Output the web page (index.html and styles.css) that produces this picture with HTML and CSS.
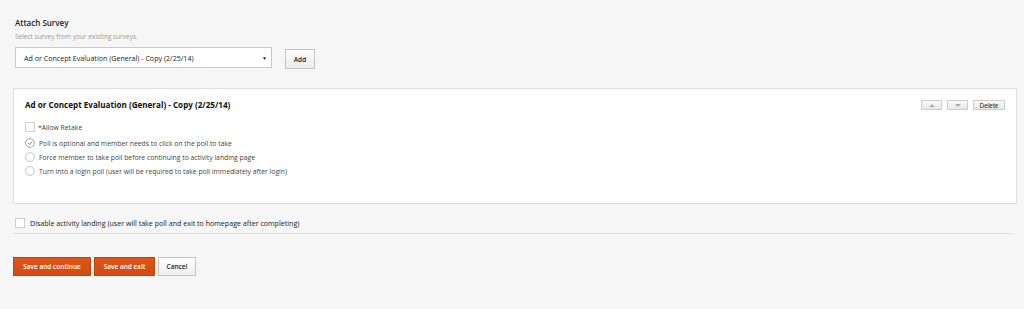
FILE: index.html
```html
<!DOCTYPE html>
<html>
<head>
<meta charset="utf-8">
<link rel="stylesheet" href="styles.css">
</head>
<body>
<div class="page">
  <section class="attach">
    <h2 class="attach-title">Attach Survey</h2>
    <p class="hint">Select survey from your existing surveys.</p>
    <div class="select-row">
      <div class="select">
        <span class="select-text">Ad or Concept Evaluation (General) - Copy (2/25/14)</span>
        <span class="caret">&#9660;</span>
      </div>
      <button class="btn-add">Add</button>
    </div>
  </section>

  <div class="panel">
    <div class="panel-head">
      <h3 class="panel-title">Ad or Concept Evaluation (General) - Copy (2/25/14)</h3>
      <div class="panel-tools">
        <button class="tool arrow"><span class="tri up"></span></button>
        <button class="tool arrow"><span class="tri down"></span></button>
        <button class="tool del">Delete</button>
      </div>
    </div>
    <label class="check-row retake"><span class="box"></span>*Allow Retake</label>
    <div class="radios">
      <label class="radio-row"><span class="circle checked"><svg viewBox="0 0 10 10" width="10" height="10"><circle cx="5" cy="5" r="4.4" fill="#fff" stroke="#8a8a8a" stroke-width="0.8"/><path d="M3 5.1 L4.4 6.4 L7 3.7" fill="none" stroke="#555" stroke-width="0.8"/></svg></span>Poll is optional and member needs to click on the poll to take</label>
      <label class="radio-row"><span class="circle"><svg viewBox="0 0 10 10" width="10" height="10"><circle cx="5" cy="5" r="4.4" fill="#fff" stroke="#bbb" stroke-width="0.8"/></svg></span>Force member to take poll before continuing to activity landing page</label>
      <label class="radio-row"><span class="circle"><svg viewBox="0 0 10 10" width="10" height="10"><circle cx="5" cy="5" r="4.4" fill="#fff" stroke="#bbb" stroke-width="0.8"/></svg></span>Turn into a login poll (user will be required to take poll immediately after login)</label>
    </div>
  </div>

  <label class="check-row disable"><span class="box"></span>Disable activity landing (user will take poll and exit to homepage after completing)</label>
  <div class="divider"></div>

  <div class="actions">
    <button class="btn-primary">Save and continue</button>
    <button class="btn-primary">Save and exit</button>
    <button class="btn-cancel">Cancel</button>
  </div>
</div>
</body>
</html>
```

FILE: styles.css
```css
html, body {
  margin: 0;
  padding: 0;
  background: #f6f6f6;
  font-family: "Open Sans", "Noto Sans", sans-serif;
  color: #333;
}
.page {
  padding: 17px 7px 0 13px;
}
.attach {
  padding-left: 2px;
}
.attach-title {
  margin: 0;
  font-size: 8px;
  font-weight: 600;
  color: #222;
  line-height: 12px;
}
.hint {
  margin: 3px 0 0;
  font-size: 6.5px;
  color: #9a9a9a;
  line-height: 9px;
}
.select-row {
  display: flex;
  align-items: flex-start;
  margin-top: 6px;
  gap: 13px;
}
.select {
  width: 257px;
  height: 21px;
  box-sizing: border-box;
  background: #fff;
  border: 1px solid #c9c9c9;
  display: flex;
  align-items: center;
  justify-content: space-between;
  padding: 0 4px 0 8px;
  font-size: 7.1px;
  color: #222;
}
.caret {
  font-size: 5px;
  color: #222;
}
.btn-add {
  margin-top: 2px;
  width: 30px;
  height: 20px;
  box-sizing: border-box;
  border: 1px solid #c4c4c4;
  background: linear-gradient(#fbfbfb, #ececec);
  font-family: inherit;
  font-size: 6.5px;
  font-weight: 600;
  color: #222;
  padding: 0;
}
.panel {
  margin-top: 19px;
  width: 1004px;
  height: 116px;
  box-sizing: border-box;
  background: #fff;
  border: 1px solid #dedede;
  padding: 10px 11px 0 11px;
}
.panel-head {
  display: flex;
  justify-content: space-between;
  align-items: flex-start;
}
.panel-title {
  margin: 0;
  font-size: 8.1px;
  font-weight: 700;
  color: #111;
  line-height: 11px;
}
.panel-tools {
  display: flex;
  gap: 5px;
  margin-top: 1px;
}
.tool {
  height: 10px;
  box-sizing: border-box;
  border: 1px solid #cdcdcd;
  background: linear-gradient(#fafafa, #e8e8e8);
  padding: 0;
  font-family: "Liberation Sans", Arial, sans-serif;
  font-size: 6.5px;
  color: #222;
  display: flex;
  align-items: center;
  justify-content: center;
}
.arrow { width: 21px; }
.del { width: 32px; }
.tri {
  width: 0;
  height: 0;
  border-left: 3.5px solid transparent;
  border-right: 3.5px solid transparent;
}
.tri.up { border-bottom: 3px solid #aaa; }
.tri.down { border-top: 3px solid #aaa; }
.check-row {
  display: flex;
  align-items: center;
  font-size: 6.8px;
  color: #444;
}
.box {
  width: 8px;
  height: 8px;
  border: 1px solid #cfcfcf;
  background: #fff;
  margin-right: 3px;
  flex: none;
}
.retake {
  margin-top: 12px;
}
.radios {
  margin-top: 5px;
  display: flex;
  flex-direction: column;
  gap: 2px;
}
.radio-row {
  display: flex;
  align-items: center;
  font-size: 6.8px;
  color: #444;
  height: 12px;
}
.circle {
  width: 10px;
  height: 10px;
  margin-right: 4px;
  display: flex;
}
.disable {
  margin: 14px 0 0 2px;
  font-size: 7.1px;
  color: #222;
}
.disable .box {
  margin-right: 5px;
}
.divider {
  margin-top: 5px;
  width: 999px;
  height: 1px;
  background: #dcdcdc;
}
.actions {
  margin-top: 23px;
  display: flex;
  gap: 3px;
}
.actions button {
  height: 19px;
  box-sizing: border-box;
  font-family: "Open Sans", sans-serif;
  font-size: 6.5px;
  font-weight: 600;
  padding: 0;
}
.btn-primary {
  background: linear-gradient(#e0561a, #d04a12);
  border: 1px solid #c2450f;
  color: #fff;
}
.btn-primary:first-child { width: 78px; }
.btn-primary:nth-child(2) { width: 61px; }
.btn-cancel {
  width: 38px;
  background: linear-gradient(#fdfdfd, #efefef);
  border: 1px solid #c4c4c4;
  color: #222;
}
```
